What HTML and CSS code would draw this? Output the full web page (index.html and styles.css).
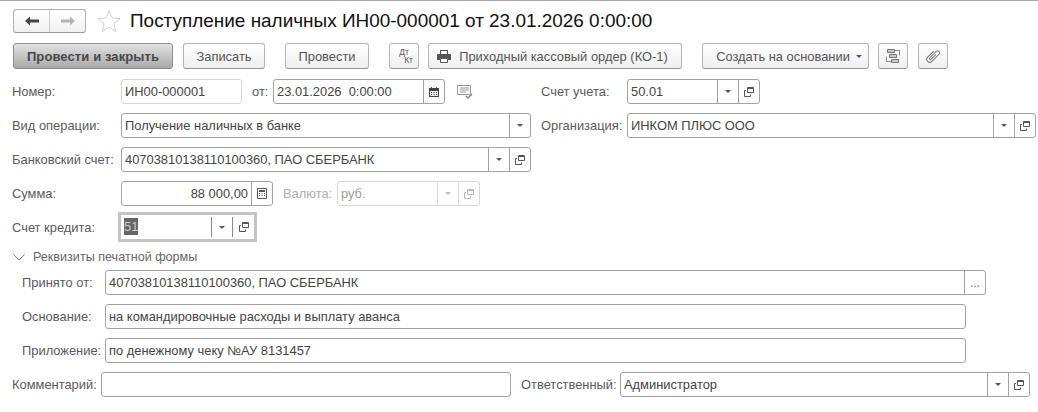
FILE: index.html
```html
<!DOCTYPE html>
<html lang="ru">
<head>
<meta charset="utf-8">
<title>Поступление наличных</title>
<link rel="stylesheet" href="styles.css">
</head>
<body>
<svg class="defs" width="0" height="0">
  <symbol id="open" viewBox="0 0 10 10"><path d="M3.500.5h6v5h-6z" fill="none" stroke="#555"/><path d="M3.500 1.500h6" stroke="#555"/><path d="M2 3.500H.5v6h6V7.500" fill="none" stroke="#555"/></symbol>
  <symbol id="tri" viewBox="0 0 6 3"><path d="M0 0h6L3 3z" fill="#555"/></symbol>
</svg>
<main class="form">
  <header class="head">
    <div class="nav">
      <span class="nav-cell"><svg width="14" height="10" viewBox="0 0 14 10"><path d="M0 5 5 .5V3.500h9v3H5v3z" fill="#444"/></svg></span>
      <span class="nav-cell nav-next"><svg width="14" height="10" viewBox="0 0 14 10"><path d="M14 5 9 .5V3.500H0v3h9v3z" fill="#b4b4b4"/></svg></span>
    </div>
    <svg class="star" width="24" height="24" viewBox="0 0 24 24"><path d="M12 1.500l3 7.500 8 .6-6.100 5.100 2 7.800L12 18.200l-6.900 4.300 2-7.800L1 9.600l8-.6z" fill="#fff" stroke="#cfcfcf"/></svg>
    <h1 class="title">Поступление наличных ИН00-000001 от 23.01.2026 0:00:00</h1>
  </header>

  <nav class="bar">
    <button class="btn primary w160">Провести и закрыть</button>
    <button class="btn w82 ml10">Записать</button>
    <button class="btn w84 ml20">Провести</button>
    <button class="btn icon ml20"><span class="dtkt"><span>Дт</span><span class="kt">Кт</span></span></button>
    <button class="btn w254 ml9 order"><svg class="print" width="14" height="13" viewBox="0 0 14 13"><path d="M3 0h8v4H3z" fill="#555"/><path d="M4 1h6v3H4z" fill="#fff"/><path d="M1 4h12a1 1 0 0 1 1 1v5h-3V8H3v2H0V5a1 1 0 0 1 1-1z" fill="#555"/><path d="M3.500 8.500h7v4h-7z" fill="#fff" stroke="#555"/></svg>Приходный кассовый ордер (КО-1)</button>
    <button class="btn w167 ml20 create">Создать на основании<svg class="caret" width="6" height="3"><use href="#tri"/></svg></button>
    <button class="btn icon ml9"><svg width="14" height="14" viewBox="0 0 14 14"><path d="M9 1.500h4.500v5M5 12.500H.5v-5" fill="none" stroke="#888"/><path d="M1.500.5h7v3h-7zM3.500 5.500h7v3h-7zM5.500 10.500h7v3h-7z" fill="#c8c8c8" stroke="#777"/></svg></button>
    <button class="btn icon ml10"><svg width="16" height="16" viewBox="0 0 16 16"><path transform="rotate(45 8 8)" d="M5 4v8.500a3 3 0 0 0 6 0V2.500a2 2 0 0 0-4 0v9a1 1 0 0 0 2 0V5" fill="none" stroke="#777"/></svg></button>
  </nav>

  <div class="row">
    <label class="lab w109">Номер:</label>
    <div class="field w121 plain"><span class="val">ИН00-000001</span></div>
    <label class="lab ml10 w21">от:</label>
    <div class="field w172"><span class="val">23.01.2026&nbsp; 0:00:00</span><span class="cell"><svg width="10" height="10" viewBox="0 0 10 10"><path d="M0 1h10v9H0z" fill="#444"/><path d="M1 4h8v5H1z" fill="#eee"/><path d="M2 0h1v2H2zM7 0h1v2H7zM2 5h1v1H2zM4.500 5h1v1h-1zM7 5h1v1H7zM2 7h1v1H2zM4.500 7h1v1h-1zM7 7h1v1H7z" fill="#444"/></svg></span></div>
    <svg class="note" width="16" height="14" viewBox="0 0 16 14"><path d="M.5.5h13v9h-13z" fill="#fff" stroke="#999"/><path d="M3 3h9M3 5h9M3 7h6" stroke="#999"/><path d="M9 11l2 2 4-4" fill="none" stroke="#888" stroke-width="1.500"/></svg>
    <label class="lab acct">Счет учета:</label>
    <div class="field w133"><span class="val">50.01</span><span class="cell"><svg width="6" height="3"><use href="#tri"/></svg></span><span class="cell"><svg width="10" height="10"><use href="#open"/></svg></span></div>
  </div>

  <div class="row">
    <label class="lab w109">Вид операции:</label>
    <div class="field w410"><span class="val">Получение наличных в банке</span><span class="cell"><svg width="6" height="3"><use href="#tri"/></svg></span></div>
    <label class="lab org">Организация:</label>
    <div class="field w409"><span class="val">ИНКОМ ПЛЮС ООО</span><span class="cell"><svg width="6" height="3"><use href="#tri"/></svg></span><span class="cell"><svg width="10" height="10"><use href="#open"/></svg></span></div>
  </div>

  <div class="row">
    <label class="lab w109">Банковский счет:</label>
    <div class="field w410"><span class="val">40703810138110100360, ПАО СБЕРБАНК</span><span class="cell"><svg width="6" height="3"><use href="#tri"/></svg></span><span class="cell"><svg width="10" height="10"><use href="#open"/></svg></span></div>
  </div>

  <div class="row">
    <label class="lab w109">Сумма:</label>
    <div class="field w152"><span class="val right">88 000,00</span><span class="cell"><svg width="10" height="11" viewBox="0 0 10 11"><path d="M.5.500h9v10h-9z" fill="#fff" stroke="#555"/><path d="M2 2h6v2H2zM2 5h1v1H2zM4.500 5h1v1h-1zM7 5h1v1H7zM2 7h1v1H2zM4.500 7h1v1h-1zM7 7h1v1H7z" fill="#555"/></svg></span></div>
    <label class="lab off cur">Валюта:</label>
    <div class="field w143 disabled"><span class="val">руб.</span><span class="cell"><svg width="6" height="3"><use href="#tri"/></svg></span><span class="cell"><svg width="10" height="10"><use href="#open"/></svg></span></div>
  </div>

  <div class="row focus-row">
    <label class="lab w106">Счет кредита:</label>
    <div class="focus"><span class="val"><span class="sel">51</span></span><span class="cell"><svg width="6" height="3"><use href="#tri"/></svg></span><span class="cell"><svg width="10" height="10"><use href="#open"/></svg></span></div>
  </div>

  <div class="section"><svg width="12" height="7" viewBox="0 0 12 7"><path d="M.5.500 6 6l5.500-5.500" fill="none" stroke="#777"/></svg><span>Реквизиты печатной формы</span></div>

  <div class="row sub">
    <label class="lab w83">Принято от:</label>
    <div class="field w882"><span class="val">40703810138110100360, ПАО СБЕРБАНК</span><span class="cell dots">...</span></div>
  </div>
  <div class="row sub">
    <label class="lab w83">Основание:</label>
    <div class="field w861"><span class="val">на командировочные расходы и выплату аванса</span></div>
  </div>
  <div class="row sub">
    <label class="lab w83">Приложение:</label>
    <div class="field w861"><span class="val">по денежному чеку №АУ 8131457</span></div>
  </div>
  <div class="row">
    <label class="lab w89">Комментарий:</label>
    <div class="field w410"></div>
    <label class="lab resp">Ответственный:</label>
    <div class="field w410"><span class="val">Администратор</span><span class="cell"><svg width="6" height="3"><use href="#tri"/></svg></span><span class="cell"><svg width="10" height="10"><use href="#open"/></svg></span></div>
  </div>
</main>
</body>
</html>
```

FILE: styles.css
```css
* { box-sizing: border-box; }
html, body { margin: 0; padding: 0; }
body {
  width: 1038px;
  height: 412px;
  overflow: hidden;
  background: #fff;
  border-top: 1px solid #a8a8a8;
  font: 12.9px "Liberation Sans", Arial, sans-serif;
  color: #555;
}
.defs { position: absolute; }
.form {
  display: flex;
  flex-direction: column;
  gap: 9px;
  padding: 8px 0 0 12px;
}
.head { display: flex; align-items: center; height: 24px; padding-left: 1px; }
.nav {
  display: flex;
  width: 73px;
  height: 24px;
  border: 1px solid #b0b0b0;
  border-bottom-color: #999;
  border-radius: 3px;
  background: linear-gradient(#fff, #f0f0f0);
}
.nav-cell { flex: 1; display: flex; align-items: center; justify-content: center; }
.nav-next { border-left: 1px solid #ccc; }
.star { margin-left: 11px; }
.title { margin: 0 0 0 9px; font-size: 18.96px; font-weight: 400; color: #111; white-space: nowrap; }

.bar { display: flex; height: 26px; margin: 1px 0; padding-left: 1px; }
.btn {
  display: flex;
  align-items: center;
  justify-content: center;
  height: 26px;
  padding: 0;
  border: 1px solid #b4b4b4;
  border-bottom-color: #969696;
  border-radius: 3px;
  background: linear-gradient(#fff, #efefef);
  font: inherit;
  color: #555;
  white-space: nowrap;
}
.primary {
  font-weight: 700;
  font-size: 13px;
  letter-spacing: .1px;
  color: #484848;
  background: linear-gradient(#e2e2e2, #a9a9a9);
  border-color: #8e8e8e;
}
.icon { width: 30px; }
.w160 { width: 160px; }
.w82 { width: 82px; }
.w84 { width: 84px; }
.w254 { width: 254px; }
.w167 { width: 167px; }
.ml9 { margin-left: 9px; }
.ml10 { margin-left: 10px; }
.ml20 { margin-left: 20px; }
.order { padding-right: 5px; }
.create { padding-left: 7px; }
.print { margin-right: 8px; }
.caret { margin-left: 6px; }
.dtkt { display: flex; flex-direction: column; font-size: 8.5px; line-height: 8px; width: 18px; }
.kt { align-self: flex-end; }

.row { display: flex; align-items: center; height: 25px; }
.sub { padding-left: 10px; }
.lab { flex: none; white-space: nowrap; color: #5a5a5a; }
.w109 { width: 109px; }
.w106 { width: 106px; }
.w83 { width: 83px; }
.w89 { width: 89px; }
.w21 { width: 21px; }
.acct { margin-left: 68px; width: 86px; }
.org { margin-left: 10px; width: 86px; }
.cur { margin-left: 10px; width: 54px; }
.resp { margin-left: 10px; width: 99px; }
.off { color: #adadad; }

.field {
  flex: none;
  display: flex;
  height: 25px;
  border: 1px solid #a2a2a2;
  border-radius: 3px;
  background: #fff;
  color: #444;
}
.w121 { width: 121px; }
.w172 { width: 172px; }
.w133 { width: 133px; }
.w410 { width: 410px; }
.w409 { width: 409px; }
.w152 { width: 152px; }
.w143 { width: 143px; }
.w882 { width: 881px; }
.w861 { width: 861px; }
.plain { border-color: #d6d6d6; }
.val {
  flex: 1;
  min-width: 0;
  padding: 0 3px;
  line-height: 23px;
  white-space: nowrap;
  overflow: hidden;
}
.right { text-align: right; }
.cell {
  flex: none;
  width: 21px;
  display: flex;
  align-items: center;
  justify-content: center;
  border-left: 1px solid #a2a2a2;
}
.dots { color: #666; align-items: flex-start; line-height: 25px; font-size: 12px; }
.disabled { border-color: #d8d8d8; color: #a0a0a0; }
.disabled .cell { border-left-color: #d8d8d8; }
.disabled .cell svg { opacity: .4; }
.note { margin-left: 12px; }

.focus-row { margin-top: -3px; height: 30px; }
.focus {
  flex: none;
  display: flex;
  width: 139px;
  height: 30px;
  padding: 2px 0;
  border: 3px solid #c4c4c4;
  color: #444;
}
.focus .cell { height: 20px; align-self: center; border-left-color: #8a8a8a; }
.focus .cell:last-child { width: 22px; }
.sel { display: inline-block; background: #666; color: #ccc; line-height: 17px; }
.focus .val { padding: 0 3px; line-height: 20px; }

.section {
  display: flex;
  align-items: center;
  height: 10px;
  padding-top: 2px;
  margin-left: 1px;
  font-size: 12.6px;
  color: #666;
}
.section span { margin-left: 8px; }
```
